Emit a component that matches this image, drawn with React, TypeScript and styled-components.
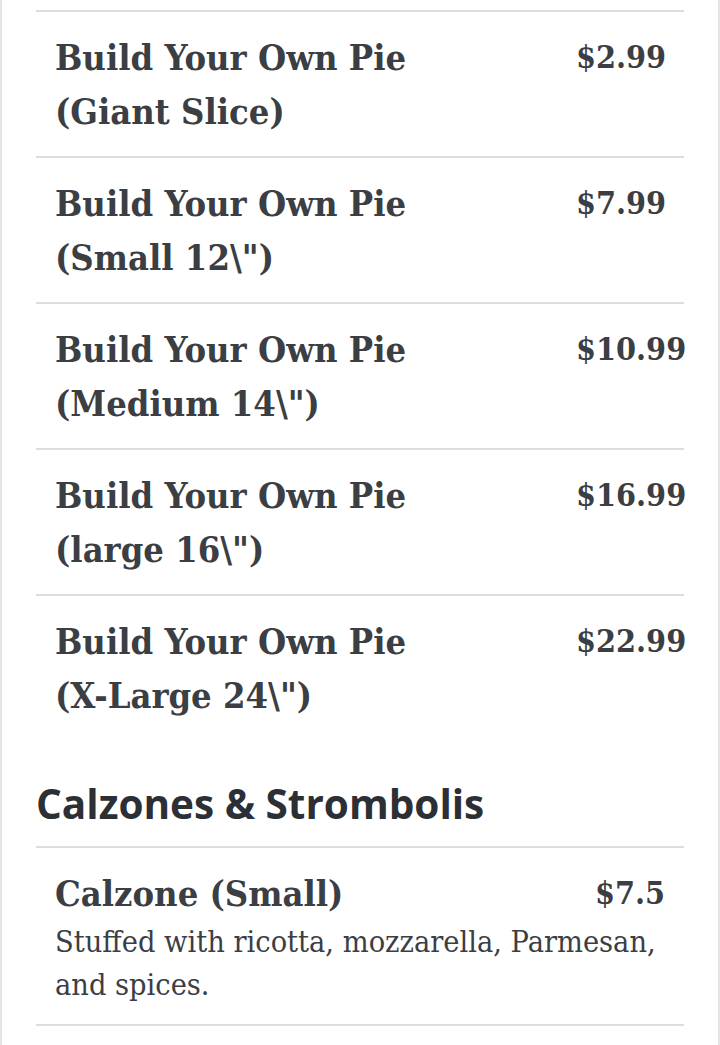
import React from "react";
import styled, { createGlobalStyle } from "styled-components";

const GlobalStyle = createGlobalStyle`
  html, body { margin: 0; padding: 0; background: #ffffff; }
  * { box-sizing: border-box; }
`;

const Card = styled.div`
  min-height: 1045px;
  border-left: 2px solid #e4e4e4;
  border-right: 2px solid #e4e4e4;
  padding: 10px 34px 0 34px;
  color: #3b3e43;
`;

const List = styled.div`
  display: flex;
  flex-direction: column;
`;

const Item = styled.div`
  border-top: 2px solid #dddddd;
  padding: 18px 19px 18px 19px;
  display: flex;
  flex-direction: column;
`;

const Row = styled.div`
  display: flex;
  justify-content: space-between;
  align-items: flex-start;
  gap: 16px;
`;

const Name = styled.div`
  font-family: "DejaVu Serif", "Liberation Serif", serif;
  font-stretch: condensed;
  font-weight: 700;
  font-size: 36px;
  line-height: 54px;
  max-width: 400px;
`;

const Price = styled.div`
  font-family: "DejaVu Serif", "Liberation Serif", serif;
  font-stretch: condensed;
  font-weight: 700;
  font-size: 32px;
  line-height: 54px;
  width: 89px;
  flex: none;
  text-align: right;
  white-space: nowrap;
`;

const Desc = styled.div`
  font-family: "DejaVu Serif", "Liberation Serif", serif;
  font-stretch: condensed;
  font-size: 30.4px;
  line-height: 43px;
`;

const Heading = styled.h2`
  margin: 39px 0 17px 0;
  font-family: "Open Sans", "Liberation Sans", sans-serif;
  font-weight: 700;
  font-size: 40.5px;
  line-height: 50px;
  color: #2c2f34;
`;

const Bottom = styled.div`
  border-top: 2px solid #dddddd;
`;

const pies = [
  { name: "Build Your Own Pie (Giant Slice)", price: "$2.99" },
  { name: 'Build Your Own Pie (Small 12\\")', price: "$7.99" },
  { name: 'Build Your Own Pie (Medium 14\\")', price: "$10.99" },
  { name: 'Build Your Own Pie (large 16\\")', price: "$16.99" },
  { name: 'Build Your Own Pie (X-Large 24\\")', price: "$22.99" },
];

export default function App() {
  return (
    <>
      <GlobalStyle />
      <Card>
        <List>
          {pies.map((p) => (
            <Item key={p.name}>
              <Row>
                <Name>{p.name}</Name>
                <Price>{p.price}</Price>
              </Row>
            </Item>
          ))}
        </List>
        <Heading>Calzones &amp; Strombolis</Heading>
        <List>
          <Item>
            <Row>
              <Name>Calzone (Small)</Name>
              <Price>$7.5</Price>
            </Row>
            <Desc>Stuffed with ricotta, mozzarella, Parmesan, and spices.</Desc>
          </Item>
          <Bottom />
        </List>
      </Card>
    </>
  );
}
